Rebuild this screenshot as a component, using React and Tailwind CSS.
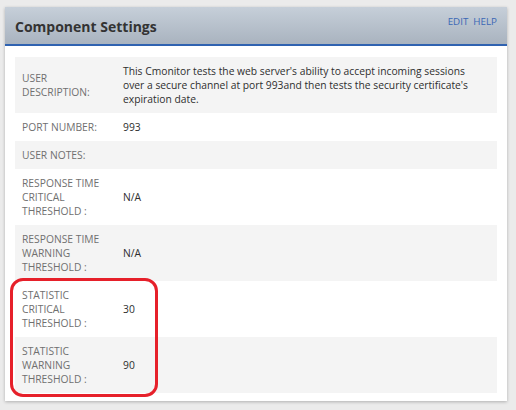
const rows = [
  {
    label: "USER DESCRIPTION:",
    value:
      "This Cmonitor tests the web server's ability to accept incoming sessions over a secure channel at port 993and then tests the security certificate's expiration date.",
  },
  { label: "PORT NUMBER:", value: "993" },
  { label: "USER NOTES:", value: "" },
  { label: "RESPONSE TIME CRITICAL THRESHOLD :", value: "N/A" },
  { label: "RESPONSE TIME WARNING THRESHOLD :", value: "N/A" },
  { label: "STATISTIC CRITICAL THRESHOLD :", value: "30" },
  { label: "STATISTIC WARNING THRESHOLD :", value: "90" },
];

export default function App() {
  return (
    <div
      className="w-[516px] h-[410px] bg-[#ebebeb] pt-[7px] pl-[5px] overflow-hidden"
      style={{ fontFamily: '"Open Sans", "Noto Sans", sans-serif' }}
    >
      <div className="relative w-[502px] bg-white shadow-[0_1px_3px_rgba(0,0,0,0.25)]">
        {/* ======= HEADER ======= */}
        <div className="h-[39px] flex items-start justify-between bg-gradient-to-b from-[#c6cfd9] to-[#a9b3bf] border-b-2 border-[#2f62b0] px-[10px]">
          <div className="pt-[10px] text-[14px] font-bold text-[#333] leading-[20px]">
            Component Settings
          </div>
          <div className="pt-[9px] text-[9.8px] text-[#3a67b5] leading-[12px] flex gap-[5px]">
            <span>EDIT</span>
            <span>HELP</span>
          </div>
        </div>

        {/* ======= TABLE ======= */}
        <div className="px-[10px] pt-[11px] pb-[8px]">
          <table className="w-full border-collapse text-[10.3px] leading-[14px]">
            <tbody>
              {rows.map((r, i) => (
                <tr key={i} className={i % 2 === 0 ? "bg-[#f4f4f4]" : "bg-white"}>
                  <td className="w-[108px] pl-[7px] pr-[14px] py-[7px] align-middle text-[#707070]">
                    {r.label}
                  </td>
                  <td className="pr-[10px] py-[7px] align-middle text-[#2e2e2e]">
                    {r.value}
                  </td>
                </tr>
              ))}
            </tbody>
          </table>
        </div>

        {/* red annotation */}
        <div className="absolute left-[5px] top-[271px] w-[148px] h-[119px] border-[3px] border-[#e6202a] rounded-[13px] pointer-events-none" />
      </div>
    </div>
  );
}
